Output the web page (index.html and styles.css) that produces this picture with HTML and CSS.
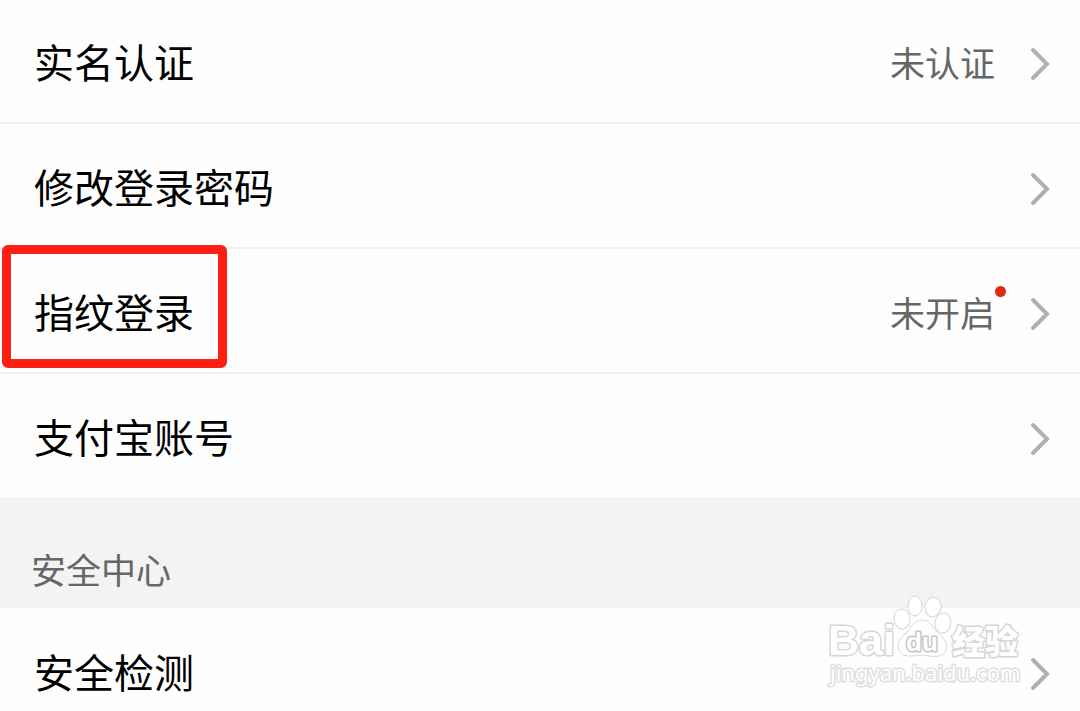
FILE: index.html
```html
<!DOCTYPE html>
<html lang="zh-CN">
<head>
<meta charset="utf-8">
<meta name="viewport" content="width=device-width, initial-scale=1">
<title>账号与安全</title>
<link rel="stylesheet" href="styles.css">
</head>
<body>
<main class="settings">
  <ul class="list list-first">
    <li class="item"><a class="row" href="#"><span class="label">实名认证</span><span class="value">未认证</span><svg class="chevron" viewBox="0 0 20 34" aria-hidden="true"><path d="M3 3 17 17 3 31"/></svg></a></li>
    <li class="item"><a class="row" href="#"><span class="label">修改登录密码</span><svg class="chevron" viewBox="0 0 20 34" aria-hidden="true"><path d="M3 3 17 17 3 31"/></svg></a></li>
    <li class="item"><a class="row" href="#"><span class="label">指纹登录</span><span class="value">未开启<i class="dot"></i></span><svg class="chevron" viewBox="0 0 20 34" aria-hidden="true"><path d="M3 3 17 17 3 31"/></svg></a><div class="highlight"></div></li>
    <li class="item"><a class="row" href="#"><span class="label">支付宝账号</span><svg class="chevron" viewBox="0 0 20 34" aria-hidden="true"><path d="M3 3 17 17 3 31"/></svg></a></li>
  </ul>
  <h2 class="section">安全中心</h2>
  <ul class="list list-last">
    <li class="item"><a class="row" href="#"><span class="label">安全检测</span><svg class="chevron" viewBox="0 0 20 34" aria-hidden="true"><path d="M3 3 17 17 3 31"/></svg></a></li>
  </ul>
  <svg class="watermark" viewBox="0 0 200 100" role="img" aria-label="Baidu 经验">
    <g class="mark">
      <ellipse cx="89" cy="16" rx="7" ry="10"/>
      <ellipse cx="107" cy="17" rx="8" ry="10" transform="rotate(12 107 17)"/>
      <ellipse cx="76" cy="29" rx="8" ry="10" transform="rotate(-8 76 29)"/>
      <ellipse cx="117" cy="33" rx="8" ry="10" transform="rotate(8 117 33)"/>
      <path d="M96 30C87 30 86 38 80 43C74 49 70 53 73 60C76 68 85 66 97 65C108 67 117 68 120 60C123 52 116 47 111 42C106 37 105 30 96 30Z"/>
      <text class="brand" x="2" y="65">Bai</text>
      <text class="du" x="80" y="61">du</text>
      <text class="jy" x="126" y="64">经验</text>
      <text class="url" x="4" y="91">jingyan.baidu.com</text>
    </g>
  </svg>
</main>
</body>
</html>
```
FILE: styles.css
```css
* {
  box-sizing: border-box;
}

body {
  margin: 0;
  background: #fefefe;
  color: #000;
  font-family: "Noto Sans CJK SC", "Noto Sans", sans-serif;
}

.settings {
  position: relative;
  overflow: hidden;
}

.list {
  margin: 0;
  padding: 0;
  list-style: none;
}

.item {
  position: relative;
  border-bottom: 2px solid #f0f0f0;
}

.item:last-child {
  border-bottom: 0;
}

.row {
  display: flex;
  align-items: center;
  padding: 35px 30px 28px 34px;
  color: inherit;
  text-decoration: none;
}

.list-first .item:first-child .row {
  padding-top: 34px;
}

.list-last .row {
  padding: 36px 30px 7px 34px;
}

.label {
  flex: 1;
  padding-bottom: 6px;
  font-size: 40px;
  line-height: 54px;
}

.value {
  position: relative;
  margin-right: 35px;
  padding-bottom: 4px;
  font-size: 35px;
  line-height: 56px;
  color: #666;
}

.dot {
  position: absolute;
  top: 2px;
  right: -11px;
  width: 11px;
  height: 11px;
  border-radius: 50%;
  background: #e02a10;
}

.chevron {
  width: 20px;
  height: 34px;
  fill: none;
  stroke: #b0b0b0;
  stroke-width: 4;
  stroke-linecap: round;
}

.highlight {
  position: absolute;
  top: -4px;
  left: 2px;
  width: 225px;
  height: 123px;
  border: 9px solid #ff1f12;
  border-radius: 6px;
  pointer-events: none;
}

.section {
  margin: 0;
  padding: 48px 31px 15px;
  background: #f3f3f3;
  color: #666;
  font-size: 35px;
  font-weight: 400;
  line-height: 48px;
}

.watermark {
  position: absolute;
  right: 54px;
  bottom: 21px;
  width: 200px;
  height: 100px;
  pointer-events: none;
}

.mark {
  fill: #fff;
  stroke: #d6d6d6;
  stroke-width: 1;
}

.mark text {
  paint-order: stroke;
  stroke-width: 3;
  stroke-linejoin: round;
}

.brand {
  font: 700 43px "Liberation Sans", sans-serif;
}

.mark .du {
  font: 700 26px "Liberation Sans", sans-serif;
  stroke: #c4c4c4;
}

.jy {
  font: 900 33px "Noto Sans CJK SC", sans-serif;
}

.mark .url {
  font: 400 22px "Noto Sans", sans-serif;
  stroke: #dedede;
}
```
